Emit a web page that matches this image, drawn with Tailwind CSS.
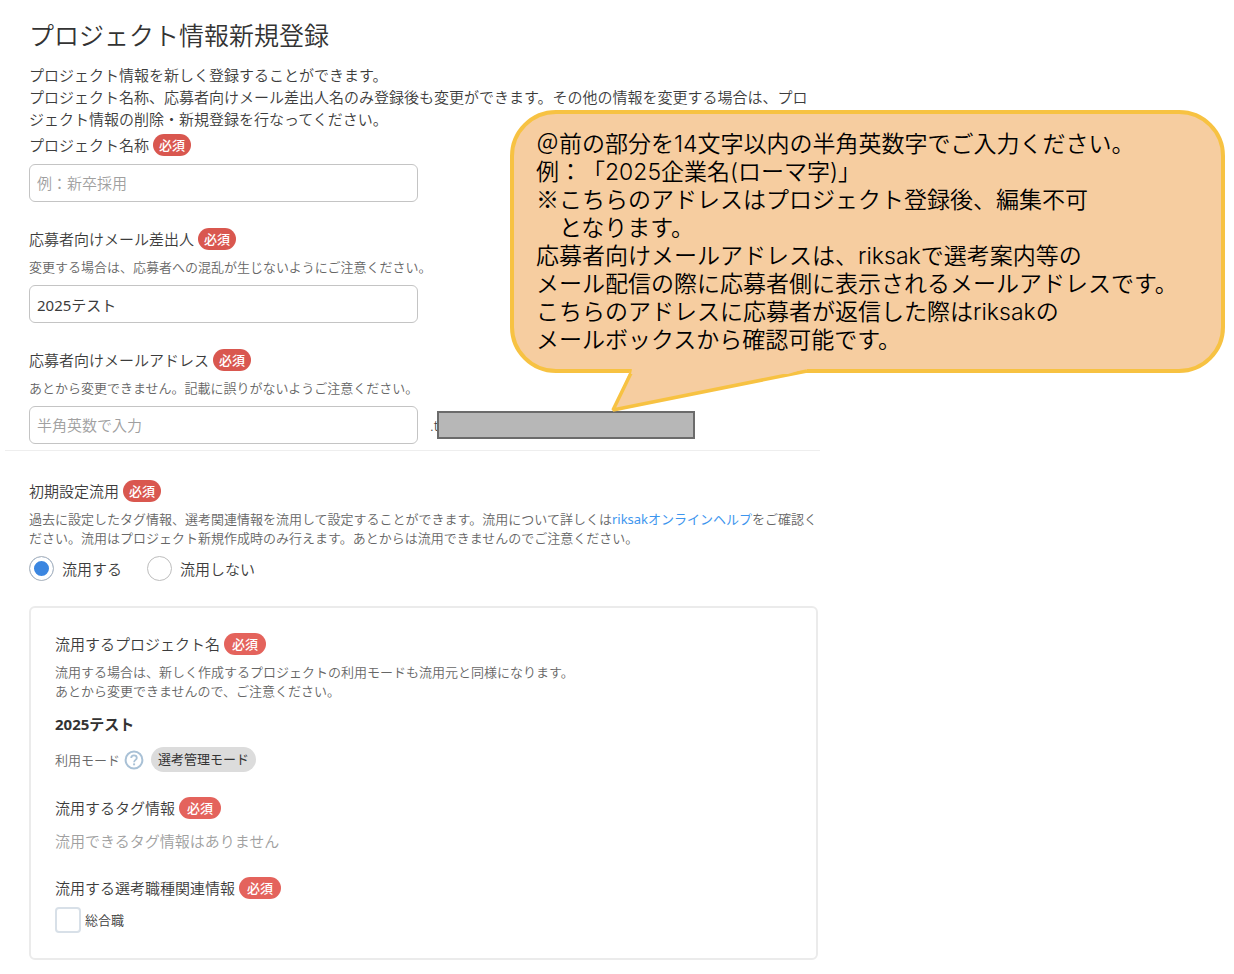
<!DOCTYPE html>
<html lang="ja">
  <head>
    <meta charset="UTF-8" />
    <meta name="viewport" content="width=device-width, initial-scale=1" />
    <title>プロジェクト情報新規登録</title>
    <script src="https://cdn.jsdelivr.net/npm/@tailwindcss/browser@4"></script>
    <style>
      body {
        font-family: "Noto Sans", "Noto Sans CJK JP", sans-serif;
        text-spacing-trim: space-all;
      }
    </style>
  </head>
  <body class="relative min-h-screen bg-white text-[15px] leading-[22px] font-[350] text-[#3c3c3c]">
    <main class="max-w-[820px] pl-[5px] pb-3">
      <form>
        <section class="border-b border-[#eee] pl-6 pt-[19px] pb-1.5">
          <h1 class="text-[25px] leading-8 text-[#333]">プロジェクト情報新規登録</h1>
          <p class="mt-[13px] whitespace-nowrap">
            プロジェクト情報を新しく登録することができます。<br />
            プロジェクト名称、応募者向けメール差出人名のみ登録後も変更ができます。その他の情報を変更する場合は、プロ<br />
            ジェクト情報の削除・新規登録を行なってください。
          </p>

          <div class="mt-1 flex flex-col gap-[26px]">
            <!-- Project name -->
            <div>
              <div class="flex items-center gap-1">
                <label for="projectName">プロジェクト名称</label>
                <span class="rounded-full bg-[#d9574f] px-1.5 text-[13px] font-medium text-white">必須</span>
              </div>
              <input
                id="projectName"
                type="text"
                placeholder="例：新卒採用"
                class="mt-2 block h-[38px] w-[389px] rounded-md border border-[#c4c4c4] px-[7px] placeholder:text-[#a0a0a0]"
              />
            </div>

            <!-- Sender name -->
            <div>
              <div class="flex items-center gap-1">
                <label for="senderName">応募者向けメール差出人</label>
                <span class="rounded-full bg-[#d9574f] px-1.5 text-[13px] font-medium text-white">必須</span>
              </div>
              <p class="mt-2 text-[13px] leading-[19px] text-[#666]">変更する場合は、応募者への混乱が生じないようにご注意ください。</p>
              <input
                id="senderName"
                type="text"
                value="2025テスト"
                class="mt-2 block h-[38px] w-[389px] rounded-md border border-[#c4c4c4] px-[7px] font-normal"
              />
            </div>

            <!-- Mail address -->
            <div>
              <div class="flex items-center gap-1">
                <label for="mailAddress">応募者向けメールアドレス</label>
                <span class="rounded-full bg-[#d9574f] px-1.5 text-[13px] font-medium text-white">必須</span>
              </div>
              <p class="mt-2 text-[13px] leading-[19px] text-[#666]">あとから変更できません。記載に誤りがないようご注意ください。</p>
              <div class="mt-2 flex items-center">
                <input
                  id="mailAddress"
                  type="text"
                  placeholder="半角英数で入力"
                  class="block h-[38px] w-[389px] rounded-md border border-[#c4c4c4] px-[7px] placeholder:text-[#a0a0a0]"
                />
                <span class="ml-3">.t</span>
                <span class="relative -ml-[2px] h-7 w-[258px] border-2 border-[#6b6b6b] bg-[#b7b7b7]"></span>
              </div>
            </div>
          </div>
        </section>

        <section class="pl-6 pr-[2px] pt-[29px]">
          <div class="flex items-center gap-1">
            <h2>初期設定流用</h2>
            <span class="rounded-full bg-[#d9574f] px-1.5 text-[13px] font-medium text-white">必須</span>
          </div>
          <p class="mt-2 whitespace-nowrap text-[13px] leading-[19px] text-[#666]">
            過去に設定したタグ情報、選考関連情報を流用して設定することができます。流用について詳しくは<a href="#" class="font-normal text-[#3d95ee]">riksakオンラインヘルプ</a>をご確認く<br />
            ださい。流用はプロジェクト新規作成時のみ行えます。あとからは流用できませんのでご注意ください。
          </p>
          <div class="mt-2 flex items-center gap-[25px]">
            <label class="flex items-center gap-2">
              <input
                type="radio"
                name="reuse"
                checked
                class="size-[25px] appearance-none rounded-full border border-[#bdbdbd] checked:bg-[#3b86e0] checked:shadow-[inset_0_0_0_4px_white]"
              />
              流用する
            </label>
            <label class="flex items-center gap-2">
              <input
                type="radio"
                name="reuse"
                class="size-[25px] appearance-none rounded-full border border-[#bdbdbd] checked:bg-[#3b86e0] checked:shadow-[inset_0_0_0_4px_white]"
              />
              流用しない
            </label>
          </div>

          <!-- Settings to carry over -->
          <div class="mt-[25px] rounded-md border-2 border-[#ebebeb] px-6 pt-[25px] pb-[25px]">
            <div class="flex items-center gap-1">
              <h3>流用するプロジェクト名</h3>
              <span class="rounded-full bg-[#e4635c] px-2 text-[13px] font-medium text-white">必須</span>
            </div>
            <p class="mt-2 text-[13px] leading-[19px] text-[#666]">
              流用する場合は、新しく作成するプロジェクトの利用モードも流用元と同様になります。<br />
              あとから変更できませんので、ご注意ください。
            </p>
            <p class="mt-3 font-bold text-[#333]">2025テスト</p>
            <div class="mt-3 flex items-center text-[13px]">
              <span class="text-[#666]">利用モード</span>
              <button type="button" aria-label="利用モードについて" class="ml-1">
                <svg class="size-5" viewBox="0 0 20 20" fill="none" stroke="#a9c1d6" stroke-width="2">
                  <circle cx="10" cy="10" r="8.4" />
                  <path d="M7.2 8.1C7.2 6.4 8.4 5.4 10 5.4s2.8 1 2.8 2.5c0 1.9-2.7 2.1-2.7 4.3" stroke-width="1.8" />
                  <path d="M10.1 13.4v1.9" />
                </svg>
              </button>
              <span class="ml-[7px] rounded-full bg-[#dcdcdc] px-[7px] leading-[25px] font-normal text-[#333]">選考管理モード</span>
            </div>

            <div class="mt-[25px] flex items-center gap-1">
              <h3>流用するタグ情報</h3>
              <span class="rounded-full bg-[#e4635c] px-2 text-[13px] font-medium text-white">必須</span>
            </div>
            <p class="mt-[11px] text-[#a0a0a0]">流用できるタグ情報はありません</p>

            <div class="mt-[25px] flex items-center gap-1">
              <h3>流用する選考職種関連情報</h3>
              <span class="rounded-full bg-[#e4635c] px-2 text-[13px] font-medium text-white">必須</span>
            </div>
            <label class="mt-2 flex items-center gap-1 text-[13px]">
              <input type="checkbox" class="size-[26px] appearance-none rounded border-2 border-[#d8e0e8] checked:bg-[#3b86e0]" />
              総合職
            </label>
          </div>
        </section>
      </form>
    </main>

    <!-- Speech bubble over the form -->
    <aside
      class="absolute top-[110px] right-[9px] left-[510px] rounded-[46px] border-4 border-[#f7c242] bg-[#f6cda0] pt-4 pb-[15px] pl-[22px] font-[Inter,'Noto_Sans_CJK_JP',sans-serif] text-[23px] leading-7 whitespace-nowrap text-black"
    >
      <p>＠前の部分を14文字以内の半角英数字でご入力ください。</p>
      <p>例：「2025企業名(ローマ字)」</p>
      <p><span class="font-['Noto_Sans_CJK_JP',sans-serif] leading-none">※</span>こちらのアドレスはプロジェクト登録後、編集不可</p>
      <p>　となります。</p>
      <p>応募者向けメールアドレスは、riksakで選考案内等の</p>
      <p>メール配信の際に応募者側に表示されるメールアドレスです。</p>
      <p>こちらのアドレスに応募者が返信した際はriksakの</p>
      <p>メールボックスから確認可能です。</p>
      <svg class="absolute top-full left-[94px] h-[44px] w-[210px]" viewBox="0 0 210 44" fill="none">
        <path d="M24 0H199V2L5 41L22 2Z" fill="#f6cda0" />
        <path d="M22 2H24L5 41L199 2" stroke="#f7c242" stroke-width="3.5" stroke-miterlimit="2" />
        <path d="M24 0H196L180 5H23Z" fill="#f6cda0" />
      </svg>
    </aside>
  </body>
</html>
